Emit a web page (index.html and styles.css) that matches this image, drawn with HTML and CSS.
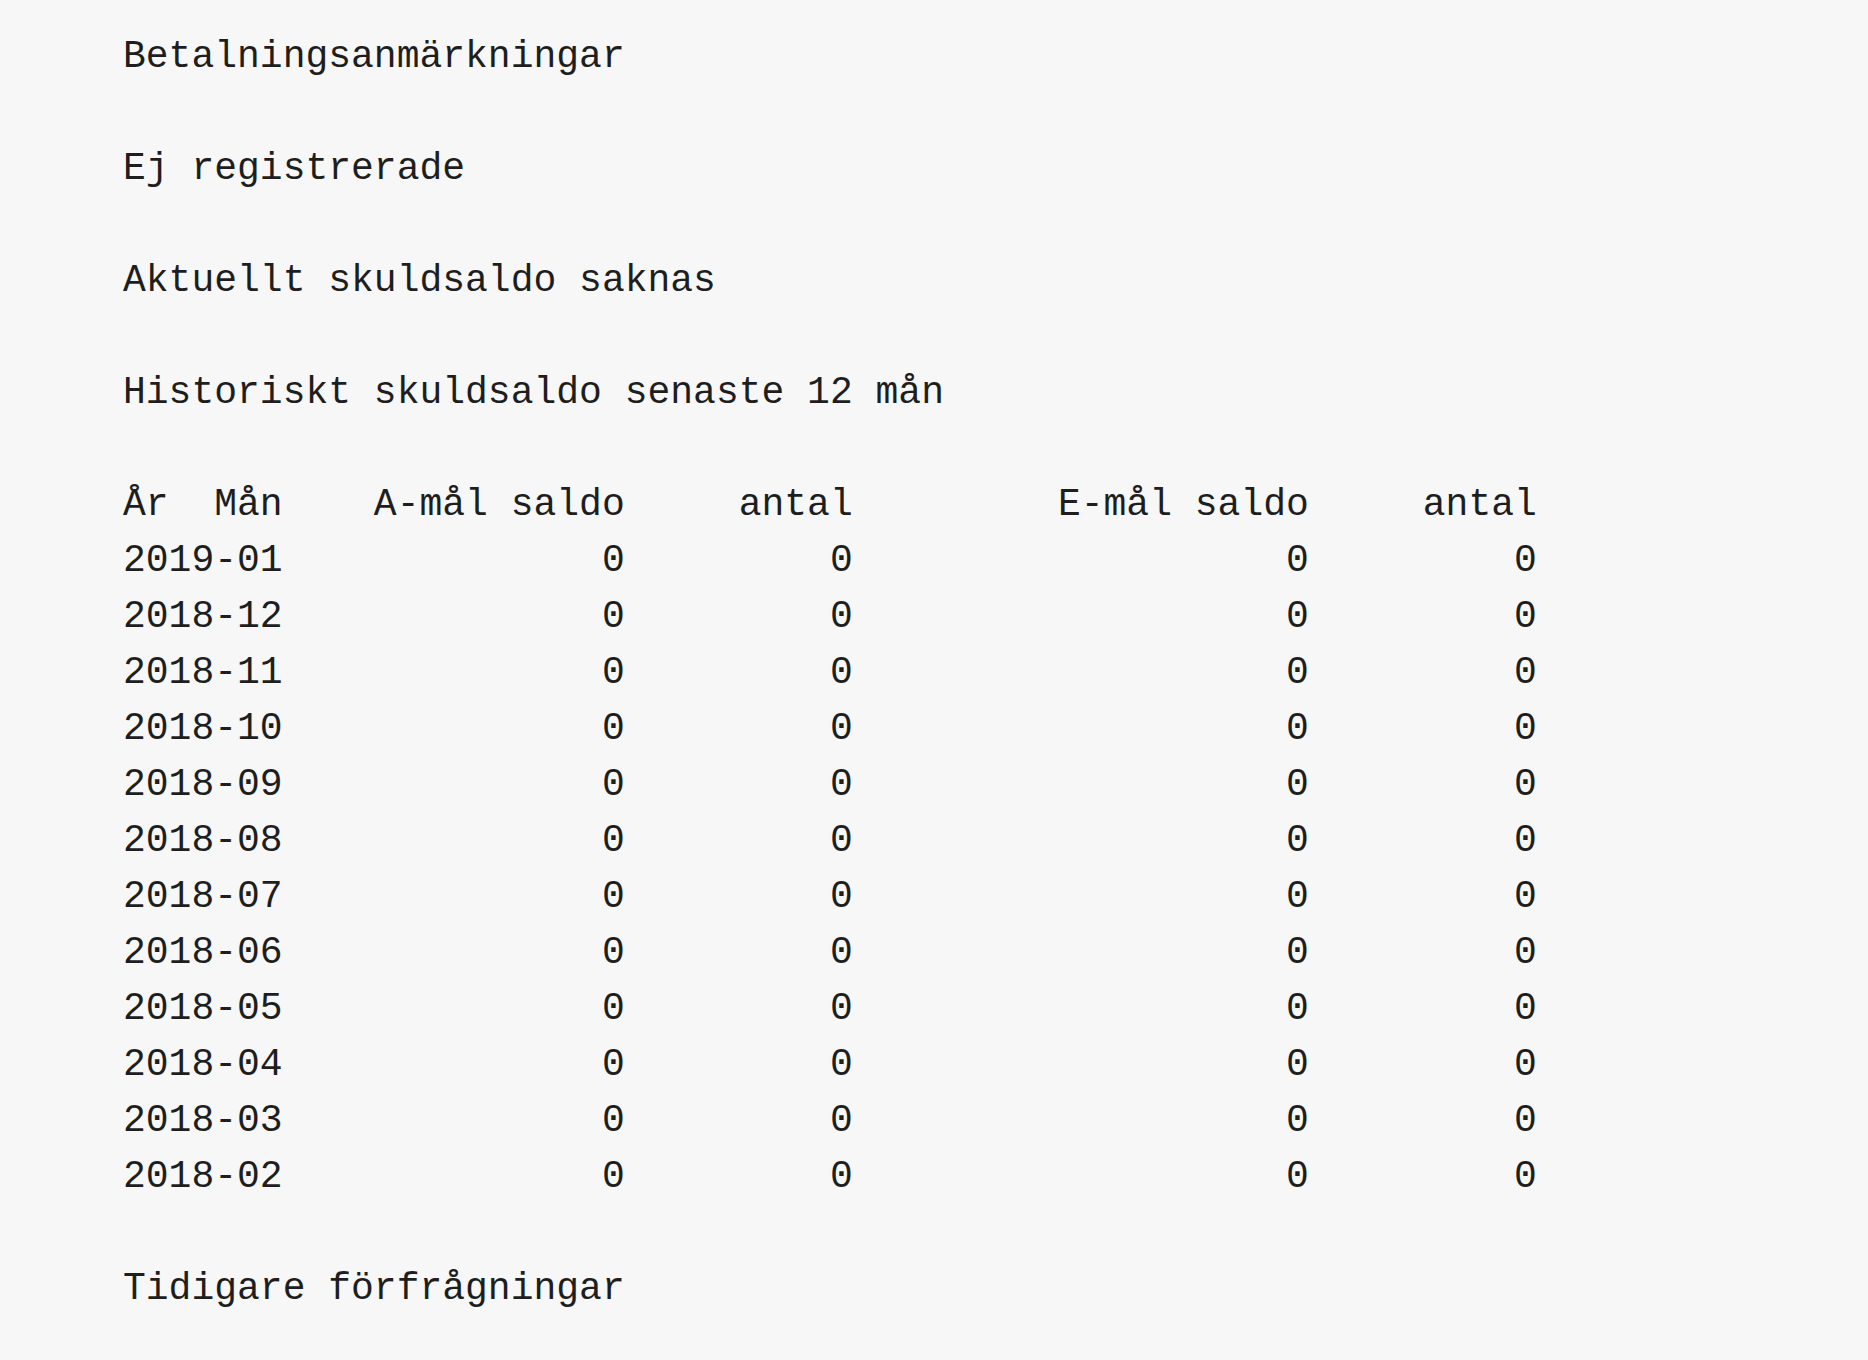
FILE: index.html
```html
<!DOCTYPE html>
<html lang="sv">
<head>
<meta charset="utf-8">
<title>Betalningsanmärkningar</title>
<link rel="stylesheet" href="styles.css">
</head>
<body>
<pre class="report">Betalningsanmärkningar

Ej registrerade

Aktuellt skuldsaldo saknas

Historiskt skuldsaldo senaste 12 mån

År  Mån    A-mål saldo     antal         E-mål saldo     antal
2019-01              0         0                   0         0
2018-12              0         0                   0         0
2018-11              0         0                   0         0
2018-10              0         0                   0         0
2018-09              0         0                   0         0
2018-08              0         0                   0         0
2018-07              0         0                   0         0
2018-06              0         0                   0         0
2018-05              0         0                   0         0
2018-04              0         0                   0         0
2018-03              0         0                   0         0
2018-02              0         0                   0         0

Tidigare förfrågningar
</pre>
</body>
</html>
```

FILE: styles.css
```css
html, body {
  margin: 0;
  padding: 0;
  background: #f7f7f7;
}

body {
  padding: 29px 0 0 123px;
}

.report {
  margin: 0;
  font-family: "Liberation Mono", "Courier New", monospace;
  font-size: 38px;
  line-height: 56px;
  color: #1e1e1e;
  white-space: pre;
}
```
